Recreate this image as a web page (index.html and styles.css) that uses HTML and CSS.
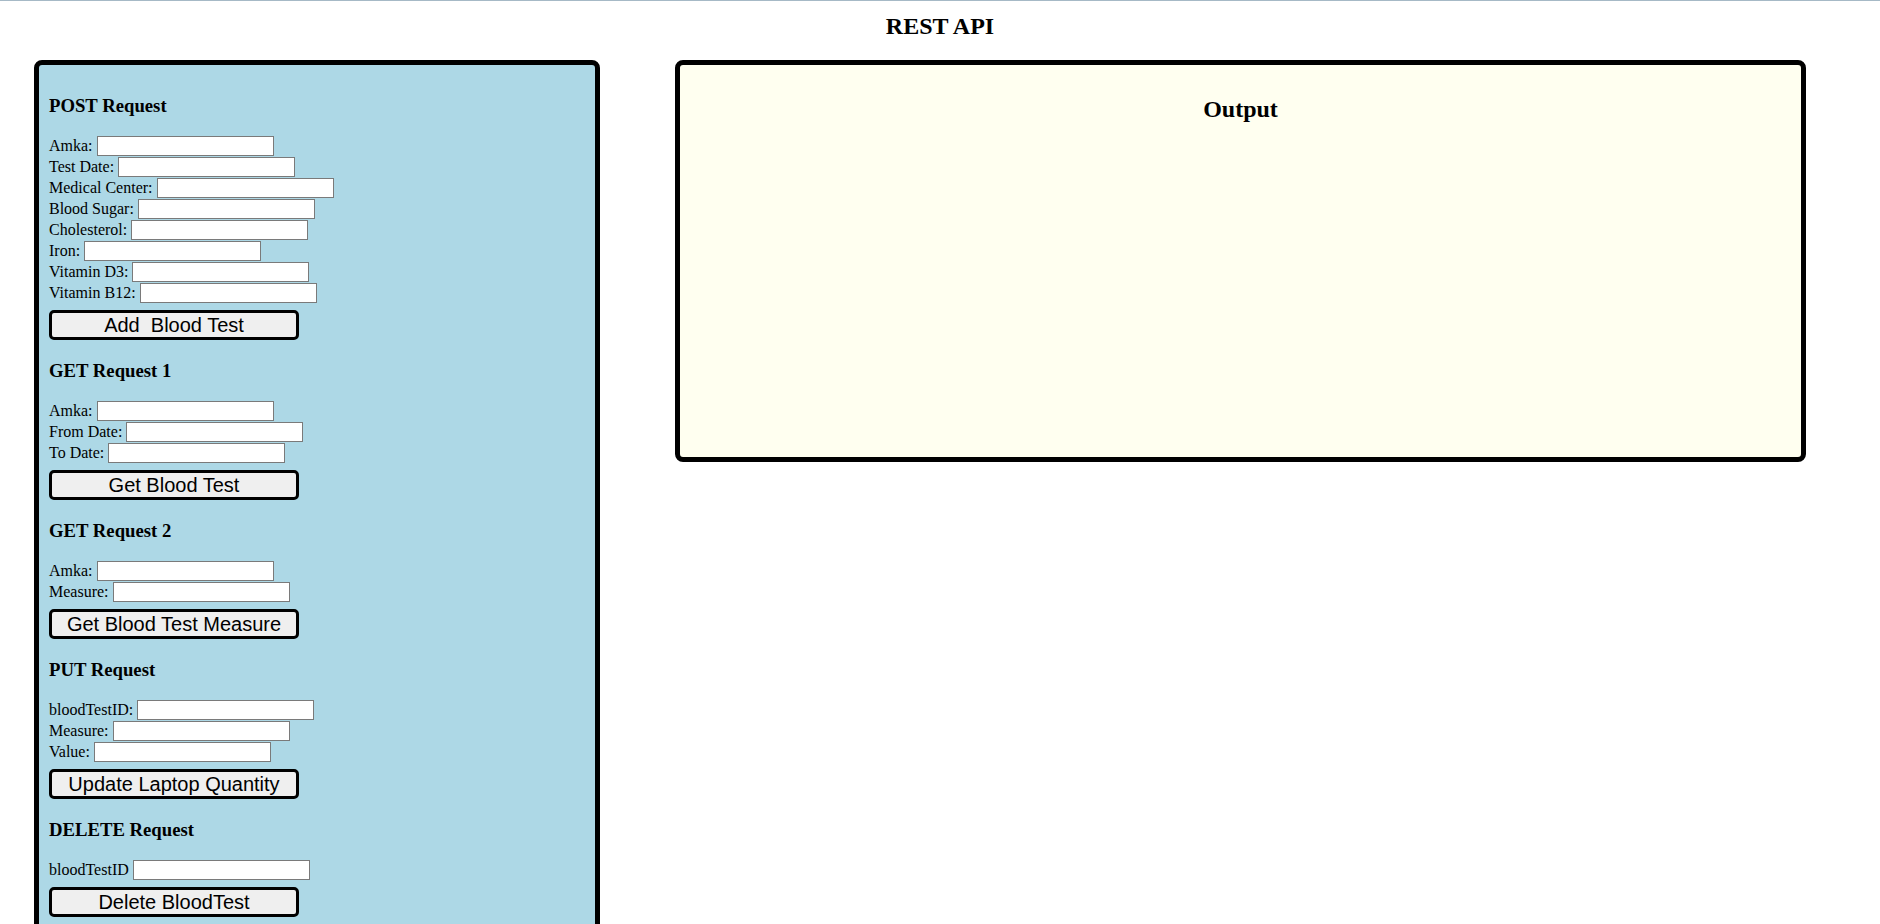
FILE: index.html
```html
<!DOCTYPE html>
<html lang="en">
<head>
    <meta charset="UTF-8">
    <meta name="viewport" content="width=device-width, initial-scale=1.0">
    <title>REST API</title>
    <link rel="stylesheet" href="styles.css">
</head>
<body>
    <h2 class="title">REST API</h2>

    <div class="main">
        <div class="requests">
            <h3>POST Request</h3>
            <form id="postForm">
                <div class="row"><label for="amka">Amka:</label><input type="text" id="amka"></div>
                <div class="row"><label for="testDate">Test Date:</label><input type="text" id="testDate"></div>
                <div class="row"><label for="medicalCenter">Medical Center:</label><input type="text" id="medicalCenter"></div>
                <div class="row"><label for="bloodSugar">Blood Sugar:</label><input type="text" id="bloodSugar"></div>
                <div class="row"><label for="cholesterol">Cholesterol:</label><input type="text" id="cholesterol"></div>
                <div class="row"><label for="iron">Iron:</label><input type="text" id="iron"></div>
                <div class="row"><label for="vitaminD3">Vitamin D3:</label><input type="text" id="vitaminD3"></div>
                <div class="row"><label for="vitaminB12">Vitamin B12:</label><input type="text" id="vitaminB12"></div>
                <input type="button" class="button" value="Add  Blood Test">
            </form>

            <h3>GET Request 1</h3>
            <form id="getForm1">
                <div class="row"><label for="getAmka">Amka:</label><input type="text" id="getAmka"></div>
                <div class="row"><label for="fromDate">From Date:</label><input type="text" id="fromDate"></div>
                <div class="row"><label for="toDate">To Date:</label><input type="text" id="toDate"></div>
                <input type="button" class="button" value="Get Blood Test">
            </form>

            <h3>GET Request 2</h3>
            <form id="getForm2">
                <div class="row"><label for="measureAmka">Amka:</label><input type="text" id="measureAmka"></div>
                <div class="row"><label for="measure">Measure:</label><input type="text" id="measure"></div>
                <input type="button" class="button" value="Get Blood Test Measure">
            </form>

            <h3>PUT Request</h3>
            <form id="putForm">
                <div class="row"><label for="putId">bloodTestID:</label><input type="text" id="putId"></div>
                <div class="row"><label for="putMeasure">Measure:</label><input type="text" id="putMeasure"></div>
                <div class="row"><label for="putValue">Value:</label><input type="text" id="putValue"></div>
                <input type="button" class="button" value="Update Laptop Quantity">
            </form>

            <h3>DELETE Request</h3>
            <form id="deleteForm">
                <div class="row"><label for="deleteId">bloodTestID</label><input type="text" id="deleteId"></div>
                <input type="button" class="button" value="Delete BloodTest">
            </form>
        </div>

        <div class="output">
            <h2>Output</h2>
            <div id="result"></div>
        </div>
    </div>
</body>
</html>
```

FILE: styles.css
```css
body {
    font-family: "Liberation Serif", "Times New Roman", serif;
    margin: 0;
    border-top: 1px solid #a6b9c6;
    color: #000;
}
.title {
    text-align: center;
    font-size: 24px;
    margin: 12px 0 20px;
}
.main {
    display: flex;
    align-items: flex-start;
    gap: 75px;
    margin-left: 34px;
}
.requests {
    box-sizing: border-box;
    width: 566px;
    padding: 10px;
    background-color: lightblue;
    border: 5px solid black;
    border-radius: 8px;
}
.requests h3 {
    font-size: 18.72px;
    margin: 20px 0 18px;
}
.row {
    display: flex;
    align-items: center;
    gap: 4px;
    height: 21px;
    font-size: 16px;
}
.row input {
    box-sizing: border-box;
    width: 177px;
    height: 20px;
    margin: 0;
    padding: 1px 2px;
    border: 1px solid #7a7a7a;
    background: white;
}
.button {
    display: block;
    box-sizing: border-box;
    width: 250px;
    height: 30px;
    margin-top: 7px;
    border: 3px solid black;
    border-radius: 5px;
    background-color: #efefef;
    font-family: "Liberation Sans", Arial, sans-serif;
    font-size: 20px;
    color: black;
    cursor: pointer;
}
.output {
    box-sizing: border-box;
    width: 1131px;
    height: 402px;
    padding: 11px 8px 8px;
    background-color: ivory;
    border: 5px solid black;
    border-radius: 8px;
}
.output h2 {
    text-align: center;
    font-size: 24px;
    margin: 20px 0;
}
```
